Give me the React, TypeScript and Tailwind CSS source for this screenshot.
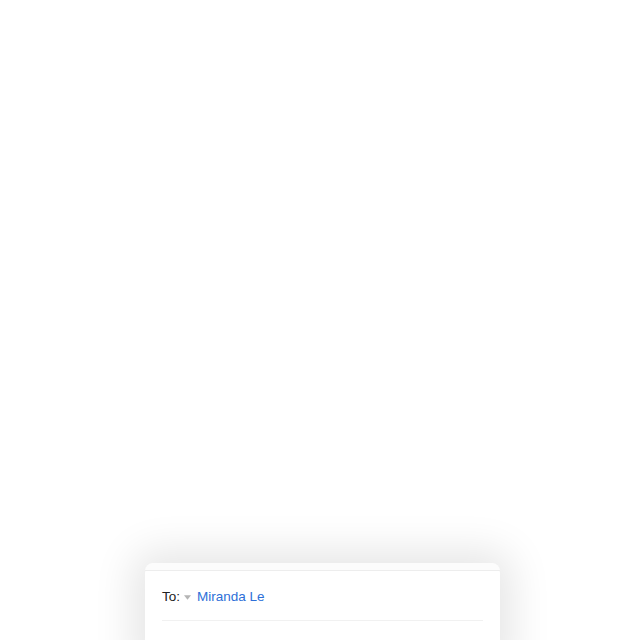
export default function App() {
  return (
    <div className="h-[640px] w-[640px] overflow-hidden bg-white font-['Liberation_Sans',Arial,sans-serif]">
      <div className="pl-[145px] pt-[563px]">
        <div className="w-[355px] rounded-t-[10px] bg-white shadow-[0_0_40px_12px_rgba(0,0,0,0.1)]">
          <div className="h-[8px] rounded-t-[10px] border-b border-[#ededed] bg-[#fcfcfc]" />
          <div className="px-[17px]">
            <div className="flex h-[49px] items-center pt-[3px] text-[13.5px]">
              <span className="text-[#222]">To:</span>
              <svg className="ml-[4px] mr-[6px] h-[5px] w-[7px]" viewBox="0 0 8 5" aria-hidden>
                <path d="M0 0h8L4 5Z" fill="#b5b5b5" />
              </svg>
              <span className="text-[#2d6fd8]">Miranda Le</span>
            </div>
            <div className="h-px bg-[#f1f1f1]" />
            <div className="h-[40px]" />
          </div>
        </div>
      </div>
    </div>
  )
}
